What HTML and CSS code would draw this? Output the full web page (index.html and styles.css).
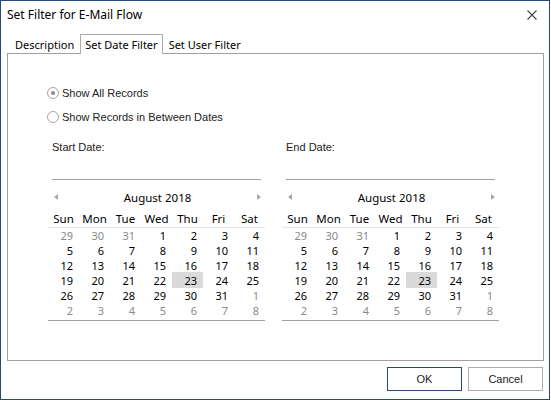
FILE: index.html
```html
<!DOCTYPE html>
<html lang="en">
<head>
    <meta charset="UTF-8">
    <title>Set Filter for E-Mail Flow</title>
    <link rel="stylesheet" href="styles.css">
</head>
<body>

    <div class="window">
        <!-- Barra de título -->
        <div class="titlebar">
            <span class="title">Set Filter for E-Mail Flow</span>
            <svg class="close" width="10" height="10" viewBox="0 0 10 10">
                <path d="M0.5 0.5 L9.5 9.5 M9.5 0.5 L0.5 9.5" stroke="#444" stroke-width="1.1" fill="none"/>
            </svg>
        </div>

        <!-- Pestañas -->
        <div class="tabs">
            <div class="tab">Description</div>
            <div class="tab active">Set Date Filter</div>
            <div class="tab">Set User Filter</div>
        </div>

        <div class="panel">
            <label class="radio"><span class="dot checked"></span>Show All Records</label>
            <label class="radio"><span class="dot"></span>Show Records in Between Dates</label>

            <div class="dates">
                <div class="date-block">
                    <div class="date-label">Start Date:</div>
                    <div class="date-line"></div>
                    <div class="calendar" id="cal-start"></div>
                </div>
                <div class="date-block">
                    <div class="date-label">End Date:</div>
                    <div class="date-line"></div>
                    <div class="calendar" id="cal-end"></div>
                </div>
            </div>
        </div>

        <div class="buttons">
            <button class="btn default">OK</button>
            <button class="btn">Cancel</button>
        </div>
    </div>

    <script>
        // Agosto 2018: empieza en miércoles
        const dias = ["Sun", "Mon", "Tue", "Wed", "Thu", "Fri", "Sat"];

        function pintarCalendario(id) {
            const celdas = [];
            for (let i = 0; i < 42; i++) {
                let n = i - 2;
                let cls = "day";
                if (n < 1) { n += 31; cls += " other"; }
                else if (n > 31) { n -= 31; cls += " other"; }
                if (i === 25) cls += " today";
                celdas.push(`<span class="${cls}">${n}</span>`);
            }
            document.getElementById(id).innerHTML =
                `<div class="cal-head">
                    <span class="arrow left"></span>
                    <span class="month">August 2018</span>
                    <span class="arrow right"></span>
                </div>
                <div class="week">${dias.map(d => `<span>${d}</span>`).join("")}</div>
                <div class="days">${celdas.join("")}</div>`;
        }

        pintarCalendario("cal-start");
        pintarCalendario("cal-end");
    </script>

</body>
</html>
```

FILE: styles.css
```css
/* Estilos generales */
body {
    margin: 0;
    background: #fff;
    font-family: 'Segoe UI', 'Noto Sans', sans-serif;
    font-size: 12px;
    color: #000;
}

.window {
    width: 550px;
    height: 400px;
    box-sizing: border-box;
    border: 1px solid #24497a;
    background: #fff;
}

/* Barra de título */
.titlebar {
    height: 27px;
    display: flex;
    align-items: center;
    justify-content: space-between;
    padding: 0 12px 0 6px;
}

.title {
    font-size: 12px;
}

/* Pestañas */
.tabs {
    display: flex;
    align-items: flex-end;
    height: 19px;
    margin-top: 6px;
    padding-left: 8px;
    position: relative;
    z-index: 1;
    font-size: 11px;
}

.tab {
    height: 17px;
    line-height: 17px;
    padding: 0 6px;
}

.tab.active {
    box-sizing: border-box;
    border: 1px solid #acacac;
    border-bottom: none;
    background: #fff;
    margin-bottom: -1px;
    height: 20px;
    line-height: 19px;
    padding: 0 4px;
}

/* Panel principal */
.panel {
    margin-left: 6px;
    width: 537px;
    height: 308px;
    box-sizing: border-box;
    border: 1px solid #a0a0a0;
    padding: 31px 0 0 39px;
    font-family: 'Liberation Sans', Arial, sans-serif;
    font-size: 11px;
    color: #222;
}

.radio {
    display: flex;
    align-items: center;
    height: 16px;
    margin-bottom: 8px;
}

.dot {
    width: 12px;
    height: 12px;
    box-sizing: border-box;
    border: 1px solid #a6a6a6;
    border-radius: 50%;
    margin-right: 3px;
    display: flex;
    align-items: center;
    justify-content: center;
}

.dot.checked::after {
    content: "";
    width: 4px;
    height: 4px;
    border-radius: 50%;
    background: #8a8a8a;
}

.dates {
    display: flex;
    gap: 17px;
    margin: 14px 0 0 1px;
}

.date-block {
    width: 217px;
}

.date-label {
    height: 16px;
    line-height: 16px;
    padding-left: 4px;
}

.date-line {
    height: 1px;
    background: #a0a0a0;
    margin: 24px 4px 0;
}

/* Calendario */
.calendar {
    font-family: 'Segoe UI', 'Noto Sans', sans-serif;
    font-size: 11px;
    color: #000;
}

.cal-head {
    display: flex;
    align-items: center;
    justify-content: space-between;
    height: 18px;
    margin-top: 8px;
    padding: 0 4px 0 6px;
    font-size: 11.5px;
}

.arrow {
    width: 0;
    height: 0;
    border-top: 3.5px solid transparent;
    border-bottom: 3.5px solid transparent;
}

.arrow.left {
    border-right: 4px solid #a8a8a8;
}

.arrow.right {
    border-left: 4px solid #a8a8a8;
}

.week {
    display: grid;
    grid-template-columns: repeat(7, 31px);
    line-height: 16px;
    padding-top: 5px;
    border-bottom: 1px solid #e3e3e3;
    font-size: 11.5px;
}

.week span {
    text-align: center;
}

.days {
    display: grid;
    grid-template-columns: repeat(7, 31px);
    grid-auto-rows: 15px;
    line-height: 15px;
    padding-bottom: 2px;
    border-bottom: 1px solid #a0a0a0;
}

.day {
    text-align: right;
    padding-right: 6px;
}

.day.other {
    color: #8a8a8a;
}

.day.today {
    background: #dadada;
    height: 16px;
    margin-top: -1px;
    line-height: 17px;
}

/* Botones */
.buttons {
    display: flex;
    justify-content: flex-end;
    gap: 6px;
    margin-top: 6px;
    padding-right: 6px;
}

.btn {
    width: 75px;
    height: 24px;
    background: #fff;
    border: 1px solid #adadad;
    font-family: 'Liberation Sans', Arial, sans-serif;
    font-size: 11px;
    color: #222;
    padding: 0;
}

.btn.default {
    border-color: #24497a;
}
```
